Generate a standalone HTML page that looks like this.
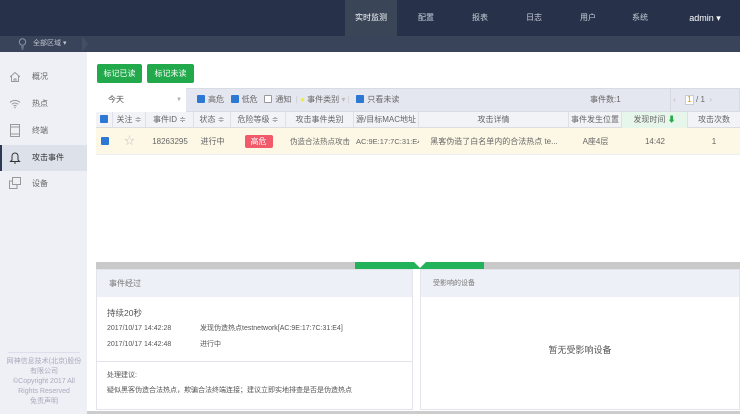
<!DOCTYPE html>
<html><head><meta charset="utf-8"><style>
*{margin:0;padding:0;box-sizing:border-box}
body{width:740px;height:414px;overflow:hidden;background:#fff;font-family:"Liberation Sans","Noto Sans CJK SC",sans-serif;font-size:8px;color:#666;position:relative}
.a{position:absolute}
.top{left:0;top:0;width:740px;height:36px;background:#27324a}
.sub{left:0;top:36px;width:740px;height:16px;background:#39435a}
.nav{top:0;height:36px;line-height:36px;color:#c8cdd8;font-size:8px;text-align:center}
.side{left:0;top:52px;width:87px;height:362px;background:#eef0f6}
.si{left:0;width:87px;height:26px;line-height:26px;padding-left:32px;color:#666}
.btn{top:64px;height:19px;line-height:19px;background:#22a94c;color:#fff;text-align:center;border-radius:2px;font-size:8px}
.fb{left:96px;top:88px;width:644px;height:24px;background:#e4e7ef;border:1px solid #d7dbe4}
.cb{display:inline-block;width:8px;height:8px;background:#2d78d2;border-radius:1px;vertical-align:-1px;margin-right:3px}
.hd{left:96px;top:112px;width:644px;height:16px;background:#f1f3f7;border-bottom:1px solid #ddd}
.hc{top:0;height:16px;line-height:16px;text-align:center;border-right:1px solid #dde0e6;color:#666}
.row{left:96px;top:128px;width:644px;height:27px;background:#fdf8e5;border-bottom:1px solid #eee}
.rc{top:0;height:27px;line-height:27px;text-align:center;color:#666;white-space:nowrap;overflow:hidden}
.ph{height:27px;line-height:27px;background:#eef0f7;padding-left:12px;color:#777}
svg{position:absolute}
</style></head><body>
<div class="a top"></div>
<div class="a" style="left:345px;top:0;width:52px;height:36px;background:#3a4558"></div>
<div class="a nav" style="left:345px;width:52px;color:#fff">实时监测</div>
<div class="a nav" style="left:410px;width:32px">配置</div>
<div class="a nav" style="left:464px;width:32px">报表</div>
<div class="a nav" style="left:518px;width:32px">日志</div>
<div class="a nav" style="left:572px;width:32px">用户</div>
<div class="a nav" style="left:624px;width:32px">系统</div>
<div class="a nav" style="left:680px;width:50px;color:#fff;font-size:9px">admin ▾</div>
<div class="a sub"></div>
<svg style="left:18px;top:38px" width="9" height="12" viewBox="0 0 9 12"><circle cx="4.5" cy="4" r="3.2" fill="none" stroke="#8a93a6"/><path d="M3 9h3M3.5 11h2" stroke="#8a93a6"/></svg>
<div class="a" style="left:33px;top:36px;line-height:16px;color:#c0c5d0;font-size:7px">全部区域 ▾</div>
<div class="a" style="left:82px;top:36px;width:0;height:0;border-top:8px solid transparent;border-bottom:8px solid transparent;border-left:6px solid #444e63"></div>
<div class="a side"></div>
<div class="a" style="left:0;top:145px;width:87px;height:26px;background:#dde1ea"></div>
<div class="a" style="left:0;top:145px;width:2px;height:26px;background:#2e3a52"></div>
<div class="a si" style="top:64px">概况</div>
<div class="a si" style="top:91px">热点</div>
<div class="a si" style="top:118px">终端</div>
<div class="a si" style="top:145px;color:#333">攻击事件</div>
<div class="a si" style="top:171px">设备</div>
<svg style="left:9px;top:71px" width="12" height="12" viewBox="0 0 12 12"><path d="M1 6L6 1.5 11 6M2.5 5v5.5h7V5M5 10.5V8h2v2.5" fill="none" stroke="#999"/></svg>
<svg style="left:9px;top:98px" width="12" height="11" viewBox="0 0 12 11"><path d="M1 4.5a7 7 0 0 1 10 0M2.8 6.3a4.5 4.5 0 0 1 6.4 0M4.5 8a2 2 0 0 1 3 0" fill="none" stroke="#999"/><circle cx="6" cy="9.5" r=".8" fill="#999"/></svg>
<svg style="left:10px;top:124px" width="10" height="13" viewBox="0 0 10 13"><rect x=".5" y=".5" width="9" height="12" fill="none" stroke="#999"/><path d="M.5 3h9M.5 10h9" stroke="#999"/></svg>
<svg style="left:9px;top:151px" width="12" height="13" viewBox="0 0 12 13"><path d="M3 9V5a3 3 0 0 1 6 0v4l1.5 1.5h-9z" fill="none" stroke="#333"/><path d="M5 12h2" stroke="#333"/></svg>
<svg style="left:9px;top:177px" width="12" height="12" viewBox="0 0 12 12"><rect x="3.5" y=".5" width="8" height="7" fill="none" stroke="#999"/><path d="M3.5 4H.5v7.5h7.5V7.5" fill="none" stroke="#999"/></svg>
<div class="a" style="left:8px;top:352px;width:72px;border-top:1px solid #dde;"></div>
<div class="a" style="left:4px;top:357px;width:80px;text-align:center;color:#aab;font-size:7px;line-height:10px">网神信息技术(北京)股份有限公司<br>©Copyright 2017 All Rights Reserved<br>免责声明</div>
<div class="a btn" style="left:97px;width:45px">标记已读</div>
<div class="a btn" style="left:147px;width:47px">标记未读</div>
<div class="a fb"></div>
<div class="a" style="left:96px;top:88px;width:90px;height:24px;background:#fff;line-height:24px;padding-left:12px;color:#555">今天<span style="position:absolute;left:80px;color:#aaa;font-size:6px">▼</span></div>
<div class="a" style="left:197px;top:88px;line-height:24px;color:#666"><span class="cb"></span>高危 &nbsp;&nbsp;<span class="cb"></span>低危 &nbsp;&nbsp;<span class="cb" style="background:#fff;border:1px solid #999"></span>通知 &nbsp;<span style="color:#ccc">|</span> <span style="color:#ee3">●</span> 事件类别 <span style="color:#bbb">▾</span> <span style="color:#ccc">|</span> &nbsp;&nbsp;<span class="cb"></span>只看未读</div>
<div class="a" style="left:590px;top:88px;line-height:24px;color:#666">事件数:1</div>
<div class="a" style="left:670px;top:88px;width:70px;height:24px;border-left:1px solid #d5d8e0;line-height:24px;color:#666">&nbsp;<span style="color:#bbb">‹</span>&nbsp;&nbsp;&nbsp;&nbsp;<span style="display:inline-block;width:9px;height:10px;background:#fff;border:1px solid #ccc;line-height:8px;text-align:center;color:#c90">1</span> / 1 &nbsp;<span style="color:#bbb">›</span></div>
<div class="a hd">
<div class="a hc" style="left:0;width:17px"><span class="cb" style="margin:0"></span></div>
<div class="a hc" style="left:17px;width:33px">关注 ≑</div>
<div class="a hc" style="left:50px;width:48px">事件ID ≑</div>
<div class="a hc" style="left:98px;width:37px">状态 ≑</div>
<div class="a hc" style="left:135px;width:55px">危险等级 ≑</div>
<div class="a hc" style="left:190px;width:68px">攻击事件类别</div>
<div class="a hc" style="left:258px;width:65px">源/目标MAC地址</div>
<div class="a hc" style="left:323px;width:150px">攻击详情</div>
<div class="a hc" style="left:473px;width:53px">事件发生位置</div>
<div class="a hc" style="left:526px;width:66px;background:#e6f6ea">发现时间 <span style="color:#2a4">⬇</span></div>
<div class="a hc" style="left:592px;width:52px;border:0">攻击次数</div>
</div>
<div class="a row">
<div class="a rc" style="left:0;width:17px"><span class="cb" style="margin:0"></span></div>
<div class="a rc" style="left:17px;width:33px;color:#ccc;font-size:11px">☆</div>
<div class="a rc" style="left:50px;width:48px">18263295</div>
<div class="a rc" style="left:98px;width:37px">进行中</div>
<div class="a rc" style="left:135px;width:55px"><span style="display:inline-block;width:28px;height:13px;line-height:13px;background:#f05a6a;color:#fff;border-radius:2px;vertical-align:middle">高危</span></div>
<div class="a rc" style="left:190px;width:68px;font-size:7.5px">伪造合法热点攻击</div>
<div class="a rc" style="left:260px;width:63px;font-size:7.5px">AC:9E:17:7C:31:E4</div>
<div class="a rc" style="left:323px;width:150px">黑客伪造了白名单内的合法热点 te...</div>
<div class="a rc" style="left:473px;width:53px">A座4层</div>
<div class="a rc" style="left:526px;width:66px">14:42</div>
<div class="a rc" style="left:592px;width:52px">1</div>
</div>
<div class="a" style="left:96px;top:262px;width:644px;height:7px;background:#c9c9c9"></div>
<div class="a" style="left:355px;top:262px;width:129px;height:7px;background:#22b35a"></div>
<div class="a" style="left:414px;top:262px;width:0;height:0;border-left:6px solid transparent;border-right:6px solid transparent;border-top:6px solid #fff"></div>
<div class="a" style="left:96px;top:269px;width:317px;height:141px;border:1px solid #e2e4ea">
<div class="ph">事件经过</div>
<div style="padding:8px 10px;color:#555;line-height:16px"><div style="font-size:8.5px">持续20秒</div>
<div style="font-size:7px">2017/10/17 14:42:28 <span style="position:absolute;left:103px">发现伪造热点testnetwork[AC:9E:17:7C:31:E4]</span></div>
<div style="font-size:7px">2017/10/17 14:42:48 <span style="position:absolute;left:103px">进行中</span></div></div>
<div style="border-top:1px solid #e2e4ea;padding:6px 10px;color:#555;font-size:7px;line-height:15px">处理建议:<br>疑似黑客伪造合法热点，欺骗合法终端连接；建议立即实地排查是否是伪造热点</div>
</div>
<div class="a" style="left:420px;top:269px;width:320px;height:141px;border:1px solid #e2e4ea">
<div class="ph" style="font-size:7px">受影响的设备</div>
<div style="text-align:center;margin-top:46px;color:#555;font-size:9px">暂无受影响设备</div>
</div>
<div class="a" style="left:87px;top:411px;width:653px;height:3px;background:#ccc"></div>
</body></html>
